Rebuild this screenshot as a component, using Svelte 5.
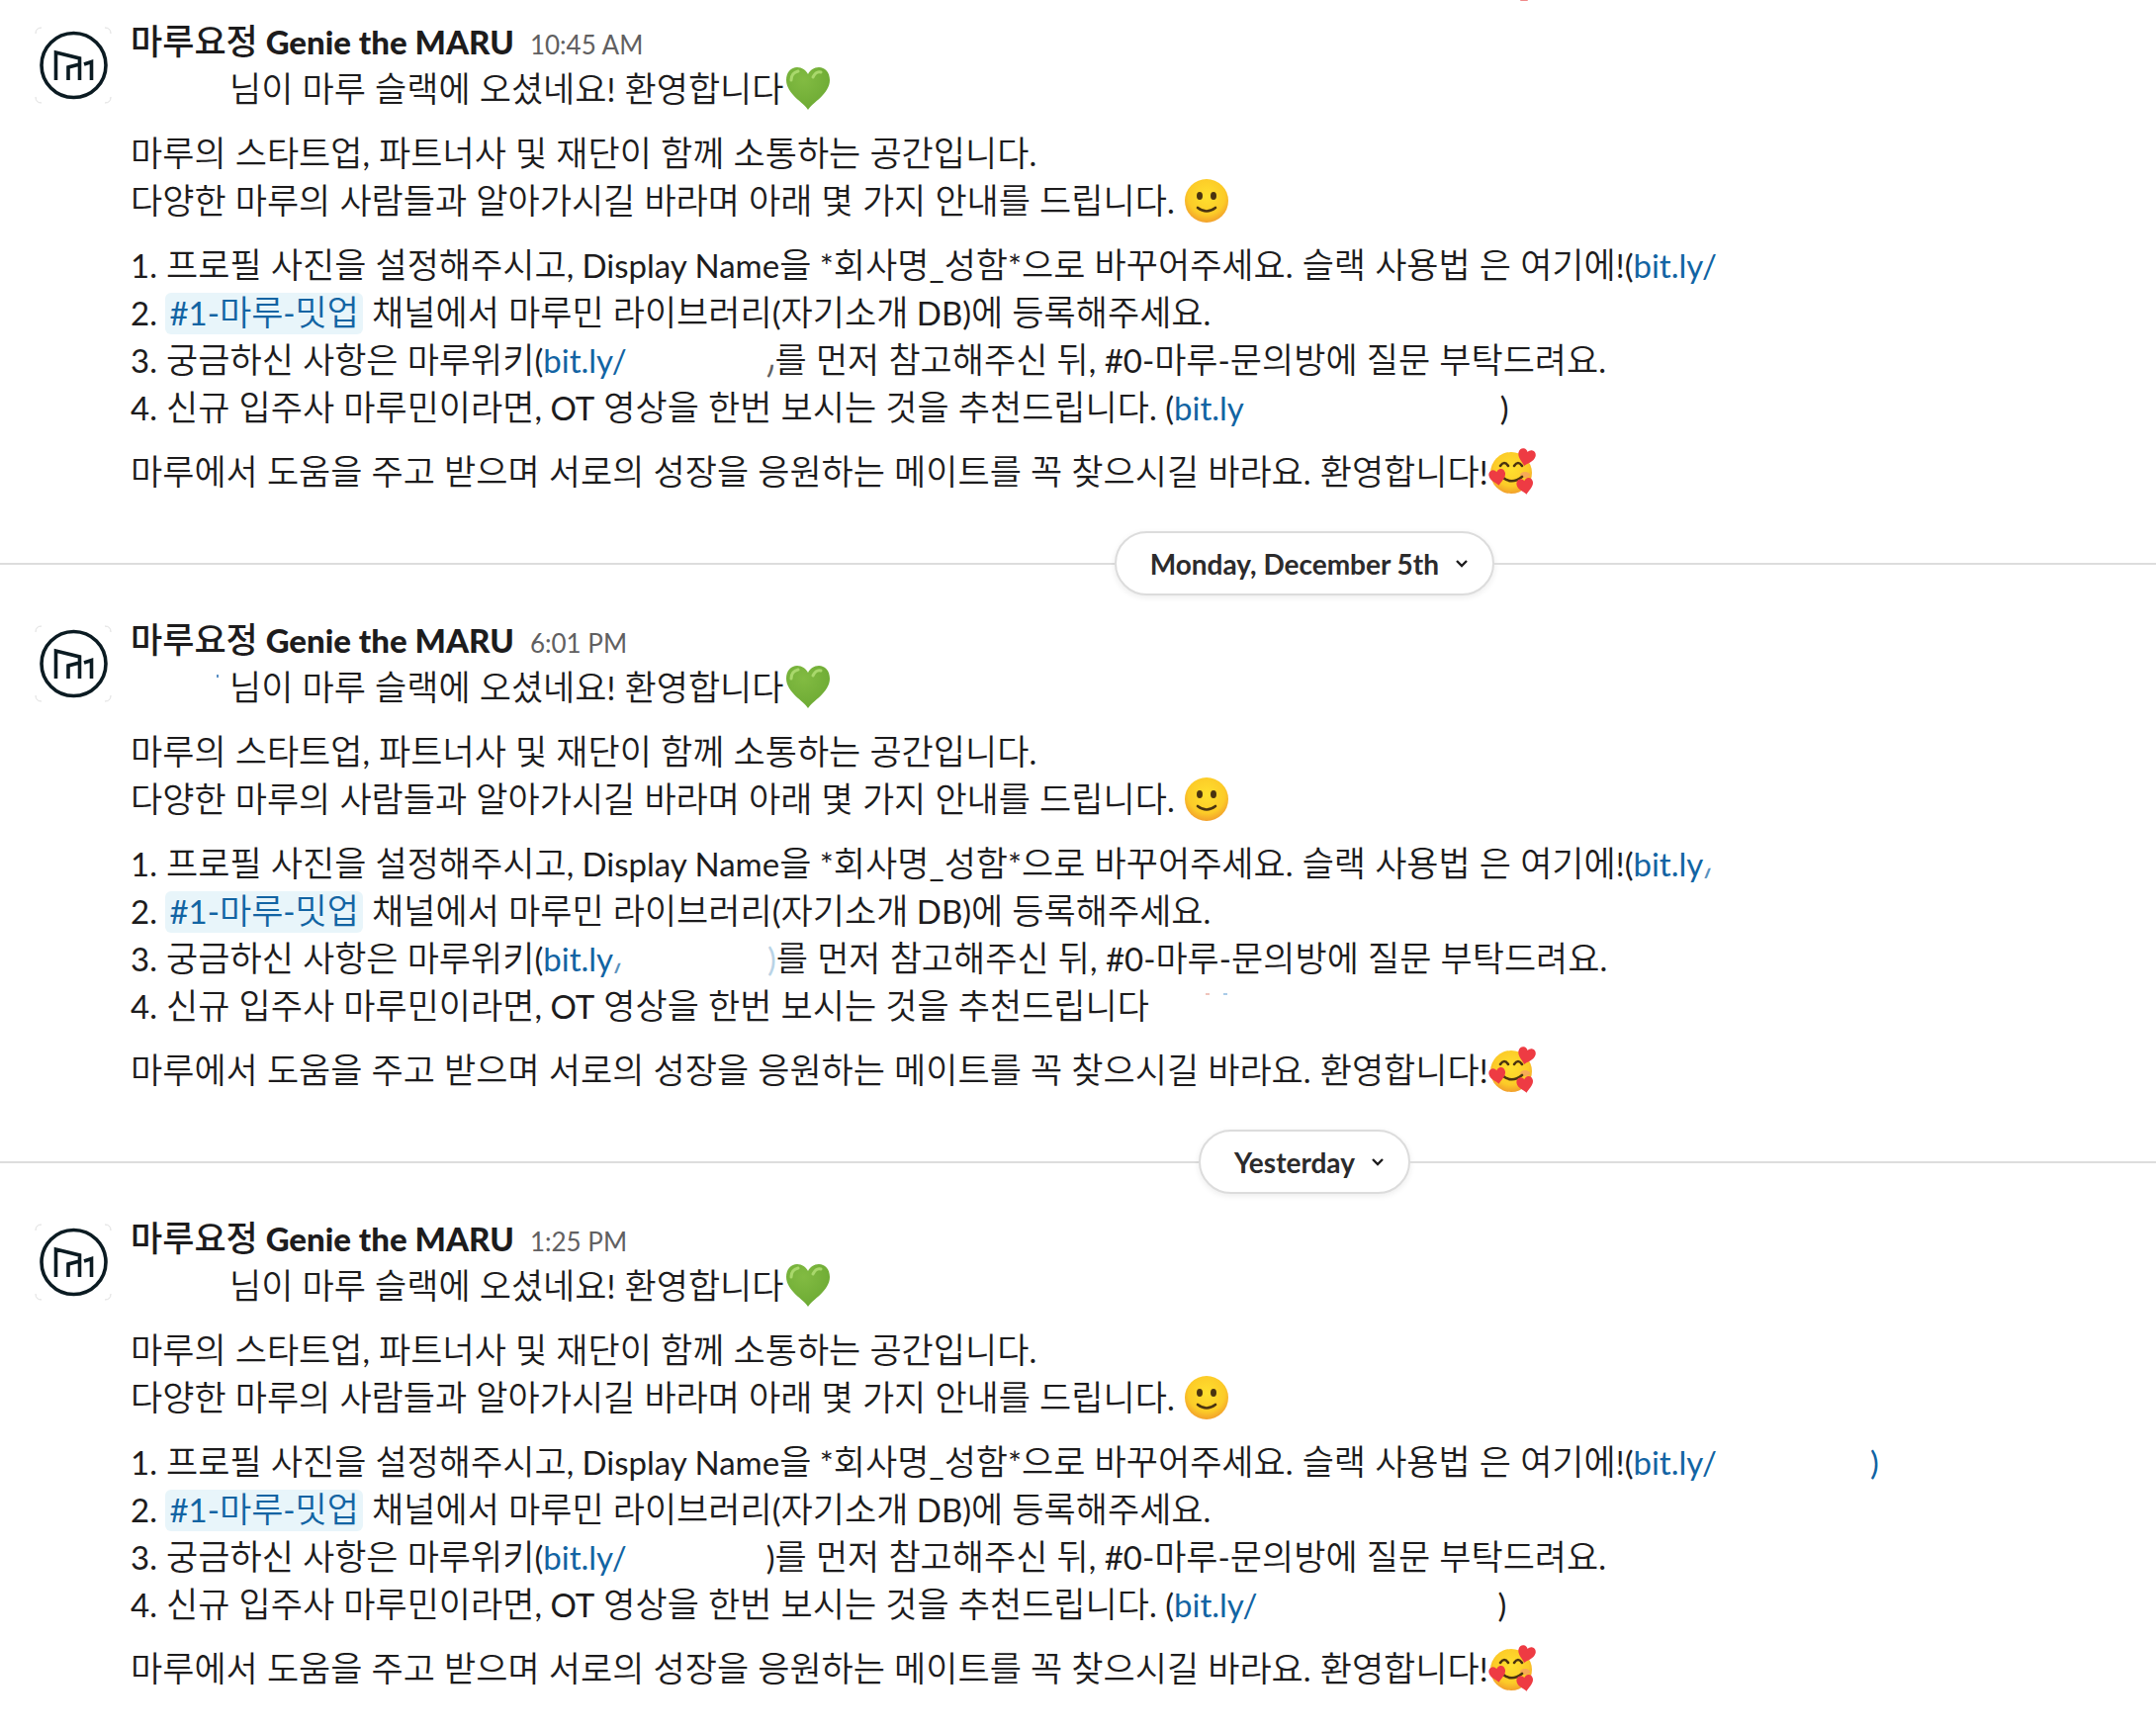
<script>
  const intro = [
    "마루의 스타트업, 파트너사 및 재단이 함께 소통하는 공간입니다.",
    "다양한 마루의 사람들과 알아가시길 바라며 아래 몇 가지 안내를 드립니다. ",
  ];
  const outro = "마루에서 도움을 주고 받으며 서로의 성장을 응원하는 메이트를 꼭 찾으시길 바라요. 환영합니다!";

  const profile = "1. 프로필 사진을 설정해주시고, Display Name을 *회사명_성함*으로 바꾸어주세요. 슬랙 사용법 은 여기에!(";
  const wiki = "3. 궁금하신 사항은 마루위키(";
  const wikiEnd = "를 먼저 참고해주신 뒤, #0-마루-문의방에 질문 부탁드려요.";
  const video = "4. 신규 입주사 마루민이라면, OT 영상을 한번 보시는 것을 추천드립니다";

  const meetup = [
    { text: "2. " },
    { channel: "#1-마루-밋업" },
    { text: " 채널에서 마루민 라이브러리(자기소개 DB)에 등록해주세요." },
  ];

  const messages = [
    {
      time: "10:45 AM",
      items: [
        [{ text: profile }, { link: "bit.ly/" }],
        meetup,
        [{ text: wiki }, { link: "bit.ly/" }, { gap: 141 }, { cut: ")" }, { text: wikiEnd }],
        [{ text: video + ". (" }, { link: "bit.ly" }, { gap: 259 }, { text: ")" }],
      ],
    },
    {
      day: "Monday, December 5th",
      time: "6:01 PM",
      tick: true,
      items: [
        [{ text: profile }, { link: "bit.ly", cut: "/" }],
        meetup,
        [{ text: wiki }, { link: "bit.ly", cut: "/" }, { gap: 141 }, { faint: ")" }, { text: wikiEnd }],
        [{ text: video }, { gap: 56 }, { specks: true }],
      ],
    },
    {
      day: "Yesterday",
      time: "1:25 PM",
      items: [
        [{ text: profile }, { link: "bit.ly/" }, { gap: 155 }, { link: ")" }],
        meetup,
        [{ text: wiki }, { link: "bit.ly/" }, { gap: 141 }, { text: ")" + wikiEnd }],
        [{ text: video + ". (" }, { link: "bit.ly/" }, { gap: 243 }, { text: ")" }],
      ],
    },
  ];

  // Hangul runs get their own face and size, everything else stays in Lato
  function runs(text) {
    return text
      .split(/( ?[가-힣]+(?: [가-힣]+)*)/)
      .filter(Boolean)
      .map((value) => ({ value, ko: /[가-힣]/.test(value) }));
  }
</script>

{#snippet mixed(text)}{#each runs(text) as run}<span class:ko={run.ko}>{run.value}</span>{/each}{/snippet}

{#snippet heartShape(transform)}
  <path
    {transform}
    d="M24 45C20 38 2 29 2 15C2 7 7 2 13 2C18 2 22 5 24 9C26 5 30 2 35 2C41 2 46 7 46 15C46 29 28 38 24 45Z"
  />
{/snippet}

<main class="page">
  <span class="previous" aria-hidden="true"></span>
  <div class="feed">
    {#each messages as message}
      {#if message.day}
        <div class="divider">
          <button class="day">
            {message.day}
            <svg class="chevron" viewBox="0 0 14 9" aria-hidden="true">
              <path d="M2 2L7 7L12 2" fill="none" stroke="#1d1c1d" stroke-width="2.4" />
            </svg>
          </button>
        </div>
      {/if}

      <article class="message">
        <svg class="avatar" viewBox="0 0 78 78" role="img" aria-label="MARU">
          <g fill="none" stroke="#dedede" stroke-width="1">
            <path d="M1 7Q1 1 7 1M71 1Q77 1 77 7M77 71Q77 77 71 77M7 77Q1 77 1 71" />
          </g>
          <g fill="none" stroke="#0b1b22" stroke-width="3.6">
            <circle cx="39.500" cy="39" r="32.500" />
            <path d="M21.500 54V26L45.500 32V54M34 54V41L45.500 38M50 38L57.500 35.500V54" />
          </g>
        </svg>

        <div class="content">
          <header class="line">
            <span class="name">{@render mixed("마루요정")} Genie the MARU</span>
            <a class="time" href="#time">{message.time}</a>
          </header>

          <p class="line">
            <svg class="hidden-name" viewBox="0 0 100 48" aria-hidden="true">
              {#if message.tick}
                <path d="M88 11V14" stroke="#5a8fc4" stroke-width="2" />
              {/if}
            </svg>{@render mixed("님이 마루 슬랙에 오셨네요! 환영합니다")}<svg
              class="emoji"
              viewBox="0 0 48 48"
              role="img"
              aria-label="green heart"
            >
              <g fill="url(#green)">{@render heartShape("")}</g>
              <path d="M7 15C7 10 10 7 14 6" fill="none" stroke="#a9d86c" stroke-width="3" stroke-linecap="round" />
              <path d="M29 12C31 8 34 6 37 7" fill="none" stroke="#a9d86c" stroke-width="3" stroke-linecap="round" />
            </svg>
          </p>

          <p>
            {#each intro as text, i}
              <span class="line">{@render mixed(text)}{#if i === 1}<svg
                    class="emoji"
                    viewBox="0 0 48 48"
                    role="img"
                    aria-label="slightly smiling face"
                  >
                    <circle cx="24" cy="24" r="22" fill="url(#yellow)" />
                    <ellipse cx="17" cy="19" rx="3" ry="4" fill="#4a3310" />
                    <ellipse cx="31" cy="19" rx="3" ry="4" fill="#4a3310" />
                    <path d="M15 31Q24 38 33 31" fill="none" stroke="#4a3310" stroke-width="2.6" stroke-linecap="round" />
                  </svg>{/if}</span>
            {/each}
          </p>

          <ol>
            {#each message.items as item}
              <li class="line">{#each item as part}{#if part.text}{@render mixed(part.text)}{:else if part.channel}<a class="channel" href="#meetup">{@render mixed(part.channel)}</a>{:else if part.link}<a class="link" href="#link">{part.link}{#if part.cut}<span class="cut">{part.cut}</span>{/if}</a>{:else if part.gap}<span class="gap" style="width: {part.gap}px"></span>{:else if part.specks}<svg class="specks" viewBox="0 0 24 48" aria-hidden="true"><path d="M1 12H5" stroke="#f0c4bc" stroke-width="2" /><path d="M19 12H23" stroke="#a9cbe8" stroke-width="2" /></svg>{:else if part.faint}<span class="faint">{part.faint}</span>{:else}<span class="cut">{part.cut}</span>{/if}{/each}</li>
            {/each}
          </ol>

          <p class="line">
            {@render mixed(outro)}<svg class="emoji" viewBox="0 0 48 48" role="img" aria-label="smiling face with hearts">
              <circle cx="23" cy="25" r="21" fill="url(#yellow)" />
              <ellipse cx="37" cy="27" rx="5" ry="3" fill="#f59a6a" opacity="0.7" />
              <g fill="none" stroke="#4a3310" stroke-width="2.6" stroke-linecap="round">
                <path d="M12 18Q16 12 20 18" />
                <path d="M26 18Q30 12 34 18" />
                <path d="M15 30Q24 37 34 29" />
              </g>
              <g fill="#ee3b43">
                {@render heartShape("translate(29 0) rotate(14 8 8) scale(0.4)")}
                {@render heartShape("translate(0 21) rotate(-10 8 8) scale(0.38)")}
                {@render heartShape("translate(28 30) rotate(-10 8 8) scale(0.38)")}
              </g>
            </svg>
          </p>
        </div>
      </article>
    {/each}
  </div>

  <svg class="defs" aria-hidden="true">
    <defs>
      <radialGradient id="yellow" cx="0.5" cy="0.4" r="0.6">
        <stop offset="0" stop-color="#ffe02e" />
        <stop offset="0.7" stop-color="#fccb28" />
        <stop offset="1" stop-color="#f2a02c" />
      </radialGradient>
      <radialGradient id="green" cx="0.4" cy="0.3" r="0.8">
        <stop offset="0" stop-color="#82bb42" />
        <stop offset="1" stop-color="#6aa832" />
      </radialGradient>
    </defs>
  </svg>
</main>

<style>
  :global(body) {
    background: #fff;
  }

  .page {
    position: relative;
    overflow: hidden;
    color: #1d1c1d;
    font-family: Lato, "Noto Sans CJK KR", sans-serif;
    font-size: 33px;
    line-height: 48px;
  }

  /* tip of the emoji that has scrolled out at the top */
  .previous {
    position: absolute;
    top: 0;
    left: 70.5%;
    width: 8px;
    height: 1px;
    border-radius: 0 0 4px 4px;
    background: #f08a8a;
  }

  /* the feed runs on past the right edge of the pane */
  .feed {
    width: 121%;
  }

  .message {
    display: flex;
    align-items: flex-start;
    gap: 19px;
    padding: 18px 35px 36px;
  }

  .avatar {
    width: 78px;
    height: 78px;
    margin-top: 9px;
    flex-shrink: 0;
  }

  .content {
    flex: 1;
  }

  p,
  ol {
    margin: 0 0 17px;
    padding: 0;
    list-style: none;
  }
  p:last-child {
    margin-bottom: 0;
  }

  .line {
    display: block;
    height: 48px;
    white-space: pre;
  }

  header.line {
    display: flex;
    align-items: baseline;
    gap: 16px;
  }

  /* Noto Sans has no Hangul, it only supplies the wider word space */
  .ko {
    font-family: "Noto Sans", "Noto Sans CJK KR", sans-serif;
    font-size: 35px;
    font-weight: 350;
    line-height: 1;
  }

  .name {
    font-weight: 900;
  }
  .name .ko {
    font-weight: 500;
  }

  .time {
    color: #616061;
    font-size: 26px;
    text-decoration: none;
  }

  .emoji {
    width: 48px;
    height: 48px;
    vertical-align: top;
  }

  .gap {
    display: inline-block;
  }

  .hidden-name {
    width: 100px;
    height: 48px;
    vertical-align: top;
  }

  .specks {
    width: 24px;
    height: 48px;
    vertical-align: top;
  }

  .link {
    color: #1264a3;
    text-decoration: none;
  }

  .channel {
    padding: 0 4px 2px;
    border-radius: 6px;
    background: #e8f5fa;
    color: #1264a3;
    text-decoration: none;
  }

  .cut {
    display: inline-block;
    clip-path: inset(60% 0 0 0);
    opacity: 0.7;
  }

  .faint {
    color: #b9d3e6;
  }

  .divider {
    display: flex;
    align-items: center;
    margin-bottom: 3px;
  }
  .divider::before,
  .divider::after {
    content: "";
    flex: 1;
    height: 2px;
    background: #dddddd;
  }

  .day {
    display: flex;
    align-items: center;
    gap: 16px;
    height: 65px;
    padding: 0 24px 0 34px;
    border: 2px solid #dcdcdc;
    border-radius: 33px;
    background: #fff;
    box-shadow: 0 2px 6px rgba(0, 0, 0, 0.08);
    color: #2c2b2c;
    font-family: Lato, sans-serif;
    font-size: 28px;
    font-weight: 700;
    line-height: 48px;
    cursor: pointer;
  }

  .chevron {
    width: 14px;
    height: 9px;
  }

  .defs {
    position: absolute;
    width: 0;
    height: 0;
  }
</style>
